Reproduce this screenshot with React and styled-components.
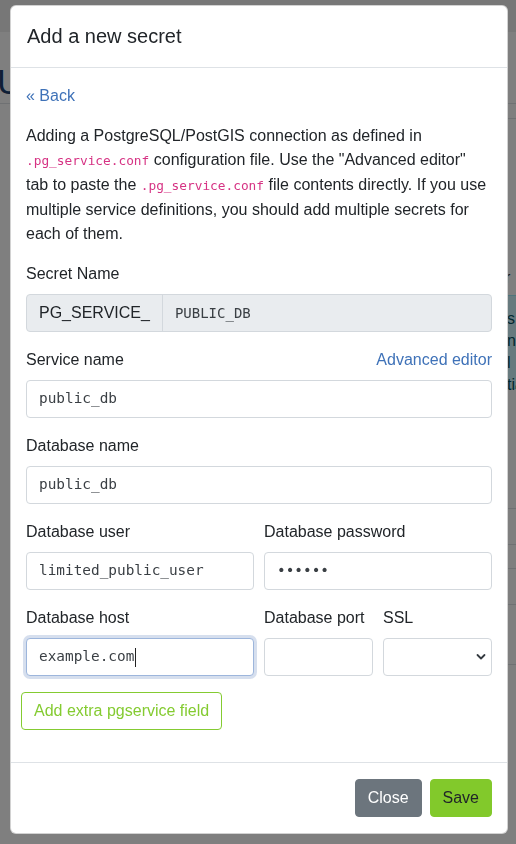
import React from "react";
import styled, { css, createGlobalStyle } from "styled-components";

const GlobalStyle = createGlobalStyle`
  * { box-sizing: border-box; }
  body {
    margin: 0;
    font-family: "Liberation Sans", Arial, sans-serif;
    font-size: 16px;
    line-height: 1.5;
    color: #212529;
    background: #fff;
    overflow: hidden;
  }
`;

const mono = `"DejaVu Sans Mono", "Liberation Mono", monospace`;

/* ---------- page behind the modal ---------- */

const Page = styled.div`
  width: 516px;
  height: 844px;
`;

const TopBar = styled.div`
  height: 32px;
  background: #eeeeee;
`;

const PageHead = styled.div`
  display: flex;
  align-items: flex-end;
  height: 72px;
  border-bottom: 1px solid #dee2e6;
`;

const PageTitle = styled.h1`
  margin: 0 0 0 -3px;
  font-size: 35px;
  font-weight: 400;
  line-height: 1.2;
  color: #1c3f6e;
`;

const SideInfo = styled.div`
  margin: 14px 0 0 496px;
  border-top: 1px solid #dee2e6;
  padding-top: 120px;
  font-size: 16px;
  line-height: 26px;
`;

const InfoAlert = styled.div`
  margin-top: 4px;
  height: 94px;
  background: #cff4fc;
  border: 1px solid #9eeaf9;
  padding: 12px 10px;
  line-height: 22px;
  color: #055160;
`;

const TableRow = styled.div`
  height: ${(p) => p.h}px;
  border-bottom: 1px solid #dee2e6;
`;

const Backdrop = styled.div`
  position: fixed;
  inset: 0;
  background: rgba(0, 0, 0, 0.5);
`;

/* ---------- modal ---------- */

const ModalWrap = styled.div`
  position: fixed;
  inset: 0;
  padding: 5px 8px 0 10px;
`;

const Dialog = styled.div`
  width: 498px;
  background: #fff;
  border-radius: 6px;
  border: 1px solid rgba(0, 0, 0, 0.175);
  display: flex;
  flex-direction: column;
`;

const Header = styled.div`
  padding: 15px 16px 16px;
  border-bottom: 1px solid #dee2e6;
`;

const Title = styled.h5`
  margin: 0;
  font-size: 20px;
  font-weight: 400;
  line-height: 30px;
`;

const Body = styled.div`
  padding: 16px 15px 16px 15px;
`;

const Link = styled.a`
  color: #3f72b8;
  text-decoration: none;
  cursor: pointer;
`;

const BackLink = styled(Link)`
  display: block;
  margin-bottom: 16px;
`;

const Intro = styled.p`
  margin: 0 0 16px;
  line-height: 24px;
`;

const Code = styled.code`
  font-family: ${mono};
  font-size: 12.8px;
  color: #d63384;
`;

const Field = styled.div`
  margin-bottom: 16px;
`;

const Label = styled.label`
  display: flex;
  justify-content: space-between;
  margin-bottom: 8px;
  white-space: nowrap;
`;

const InputGroup = styled.div`
  display: flex;
  height: 38px;
  background: #e9ecef;
  border: 1px solid #d3d8dd;
  border-radius: 4px;
`;

const Addon = styled.span`
  display: flex;
  align-items: center;
  padding: 0 12px;
  border-right: 1px solid #d3d8dd;
  color: #212529;
`;

const TextBox = styled.div`
  display: flex;
  align-items: center;
  height: 38px;
  padding: 0 12px;
  border: 1px solid #d3d8dd;
  border-radius: 4px;
  background: #fff;
  font-family: ${mono};
  font-size: 14.4px;
  color: #3a3f44;
  white-space: pre;

  ${(p) =>
    p.$focused &&
    css`
      border-color: #9db6dc;
      box-shadow: 0 0 0 3px rgba(120, 150, 200, 0.3);
    `}

  ${InputGroup} & {
    flex: 1;
    height: 36px;
    border: 0;
    font-size: 14px;
    background: transparent;
  }
`;

const Caret = styled.span`
  display: inline-block;
  width: 1px;
  height: 19px;
  margin-left: 1px;
  background: #222;
`;

const Row = styled.div`
  display: grid;
  grid-template-columns: 1fr 1fr;
  column-gap: 10px;
`;

const SubRow = styled.div`
  display: grid;
  grid-template-columns: 1fr 1fr;
  column-gap: 10px;
`;

const SelectBox = styled.div`
  position: relative;
  height: 38px;
  border: 1px solid #d3d8dd;
  border-radius: 4px;
  background: #fff;
`;

const Chevron = styled.svg`
  position: absolute;
  right: 5px;
  top: 14px;
`;

const OutlineButton = styled.button`
  margin: 0 0 16px -5px;
  height: 38px;
  padding: 0 12px;
  border: 1px solid #84cb31;
  border-radius: 4px;
  background: #fff;
  color: #84cb31;
  font-family: inherit;
  font-size: 16px;
`;

const Footer = styled.div`
  display: flex;
  justify-content: flex-end;
  gap: 8px;
  padding: 16px 15px 16px;
  border-top: 1px solid #dee2e6;
`;

const Button = styled.button`
  height: 38px;
  padding: 0 12px;
  border: 1px solid ${(p) => (p.$variant === "primary" ? "#82c92b" : "#6c757d")};
  border-radius: 4px;
  background: ${(p) => (p.$variant === "primary" ? "#82c92b" : "#6c757d")};
  color: ${(p) => (p.$variant === "primary" ? "#212529" : "#fff")};
  font-family: inherit;
  font-size: 16px;
`;

export default function App() {
  return (
    <>
      <GlobalStyle />
      <Page>
        <TopBar />
        <PageHead>
          <PageTitle>Users</PageTitle>
        </PageHead>
        <SideInfo>
          <div>o</div>
          <div>er</div>
          <InfoAlert>
            s<br />ne<br />l<br />tia
          </InfoAlert>
          <TableRow h={120} />
          <TableRow h={36} />
          <TableRow h={24} />
          <TableRow h={36} />
          <TableRow h={60} />
        </SideInfo>
      </Page>
      <Backdrop />
      <ModalWrap>
        <Dialog>
          <Header>
            <Title>Add a new secret</Title>
          </Header>
          <Body>
            <BackLink>« Back</BackLink>
            <Intro>
              Adding a PostgreSQL/PostGIS connection as defined in{" "}
              <Code>.pg_service.conf</Code> configuration file. Use the
              "Advanced editor" tab to paste the <Code>.pg_service.conf</Code>{" "}
              file contents directly. If you use multiple service definitions,
              you should add multiple secrets for each of them.
            </Intro>

            <Field>
              <Label>Secret Name</Label>
              <InputGroup>
                <Addon>PG_SERVICE_</Addon>
                <TextBox role="textbox">PUBLIC_DB</TextBox>
              </InputGroup>
            </Field>

            <Field>
              <Label>
                Service name <Link>Advanced editor</Link>
              </Label>
              <TextBox role="textbox">public_db</TextBox>
            </Field>

            <Field>
              <Label>Database name</Label>
              <TextBox role="textbox">public_db</TextBox>
            </Field>

            <Row>
              <Field>
                <Label>Database user</Label>
                <TextBox role="textbox">limited_public_user</TextBox>
              </Field>
              <Field>
                <Label>Database password</Label>
                <TextBox role="textbox">••••••</TextBox>
              </Field>
            </Row>

            <Row>
              <Field>
                <Label>Database host</Label>
                <TextBox role="textbox" $focused>
                  example.com
                  <Caret />
                </TextBox>
              </Field>
              <SubRow>
                <Field>
                  <Label>Database port</Label>
                  <TextBox role="textbox" />
                </Field>
                <Field>
                  <Label>SSL</Label>
                  <SelectBox>
                    <Chevron width="10" height="8" viewBox="0 0 10 8">
                      <path
                        d="M1.5 2 L5 5.5 L8.5 2"
                        fill="none"
                        stroke="#343a40"
                        strokeWidth="1.8"
                        strokeLinecap="round"
                        strokeLinejoin="round"
                      />
                    </Chevron>
                  </SelectBox>
                </Field>
              </SubRow>
            </Row>

            <OutlineButton>Add extra pgservice field</OutlineButton>
          </Body>
          <Footer>
            <Button>Close</Button>
            <Button $variant="primary">Save</Button>
          </Footer>
        </Dialog>
      </ModalWrap>
    </>
  );
}
